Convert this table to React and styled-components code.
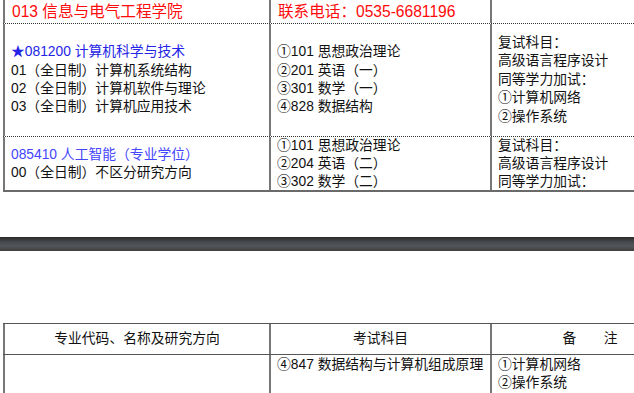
import React from 'react'
import styled, { createGlobalStyle } from 'styled-components'

const GlobalStyle = createGlobalStyle`
  html, body {
    margin: 0;
    padding: 0;
    background: #fff;
    overflow: hidden;
  }
  body {
    font-family: "Liberation Sans", "Noto Sans CJK SC", sans-serif;
    color: #111;
  }
`

const Page = styled.div`
  width: 634px;
  height: 393px;
  overflow: hidden;
  display: flex;
  flex-direction: column;
  font-family: "Liberation Sans", "Noto Sans CJK SC", sans-serif;
`

const Table = styled.div`
  margin-left: 3px;
  width: 685px;
  flex-shrink: 0;
  display: flex;
  flex-direction: column;
  border-top: ${p => (p.closedTop ? '1px solid #555' : 'none')};
  border-bottom: ${p => (p.closedBottom ? '2px solid #6a6a6a' : 'none')};
`

const Row = styled.div`
  display: grid;
  grid-template-columns: 266px 221px 198px;
  height: ${p => p.h}px;
  border-bottom: ${p =>
    p.line === 'dotted' ? '1px dotted #333' : p.line === 'solid' ? '1px solid #555' : 'none'};
`

const Cell = styled.div`
  border-left: 2px solid #777;
  padding-left: ${p => (p.center ? 0 : 6)}px;
  display: flex;
  flex-direction: column;
  justify-content: ${p => (p.top ? 'flex-start' : 'center')};
  align-items: ${p => (p.center ? 'center' : 'flex-start')};
  padding-top: ${p => (p.top ? 1 : 0)}px;
  font-size: 13.8px;
  line-height: ${p => p.lh || 18}px;
  white-space: nowrap;
  overflow: hidden;
`

const Title = styled.span`
  color: #ff0a0a;
  font-family: "Liberation Sans", "Noto Sans CJK SC", sans-serif;
  font-size: 15.6px;
  line-height: 22px;
  padding-left: 1px;
`

const Major = styled.span`
  color: ${p => (p.light ? '#4545ff' : '#2424e6')};
`

const Line = styled.span``

const Bar = styled.div`
  margin-top: 45px;
  height: 14px;
  width: 100%;
  flex-shrink: 0;
  background: linear-gradient(#2a2a2a 0%, #45494c 35%, #52565a 65%, #3e3e3e 100%);
`

const Spacer = styled.div`
  height: 72px;
  flex-shrink: 0;
`

export default function App() {
  return (
    <Page>
      <GlobalStyle />
      <Table closedBottom>
        <Row h={23} line="dotted">
          <Cell><Title>013 信息与电气工程学院</Title></Cell>
          <Cell><Title>联系电话：0535-6681196</Title></Cell>
          <Cell />
        </Row>
        <Row h={112} line="dotted">
          <Cell lh={18.4}>
            <Major>★081200 计算机科学与技术</Major>
            <Line>01（全日制）计算机系统结构</Line>
            <Line>02（全日制）计算机软件与理论</Line>
            <Line>03（全日制）计算机应用技术</Line>
          </Cell>
          <Cell lh={18.4}>
            <Line>①101 思想政治理论</Line>
            <Line>②201 英语（一）</Line>
            <Line>③301 数学（一）</Line>
            <Line>④828 数据结构</Line>
          </Cell>
          <Cell lh={18.5}>
            <Line>复试科目：</Line>
            <Line>高级语言程序设计</Line>
            <Line>同等学力加试：</Line>
            <Line>①计算机网络</Line>
            <Line>②操作系统</Line>
          </Cell>
        </Row>
        <Row h={53}>
          <Cell lh={17.5}>
            <Major light>085410 人工智能（专业学位）</Major>
            <Line>00（全日制）不区分研究方向</Line>
          </Cell>
          <Cell>
            <Line>①101 思想政治理论</Line>
            <Line>②204 英语（二）</Line>
            <Line>③302 数学（二）</Line>
          </Cell>
          <Cell>
            <Line>复试科目：</Line>
            <Line>高级语言程序设计</Line>
            <Line>同等学力加试：</Line>
          </Cell>
        </Row>
      </Table>
      <Bar />
      <Spacer />
      <Table closedTop>
        <Row h={30} line="solid">
          <Cell center>专业代码、名称及研究方向</Cell>
          <Cell center>考试科目</Cell>
          <Cell center>备　　注</Cell>
        </Row>
        <Row h={38} line="solid">
          <Cell top />
          <Cell top>
            <Line>④847 数据结构与计算机组成原理</Line>
          </Cell>
          <Cell top>
            <Line>①计算机网络</Line>
            <Line>②操作系统</Line>
          </Cell>
        </Row>
      </Table>
    </Page>
  )
}
